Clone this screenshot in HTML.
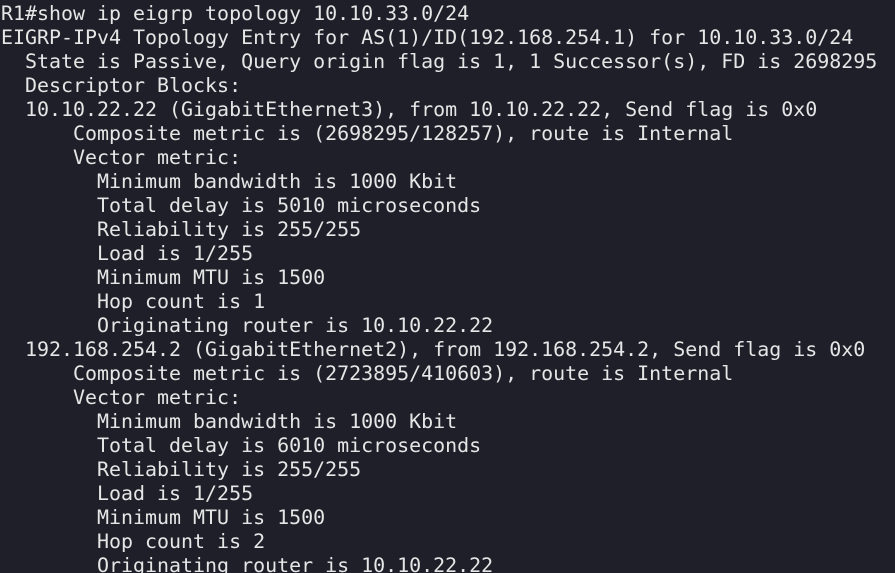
<!DOCTYPE html>
<html><head><style>
html,body{margin:0;padding:0;background:#1e1f29;width:895px;height:573px;overflow:hidden}
pre{margin:0;padding:1px 0 0 1px;font-family:"DejaVu Sans Mono","Liberation Mono",monospace;font-size:19.95px;line-height:24px;color:#e6e6e6;white-space:pre}
</style></head><body><pre>R1#show ip eigrp topology 10.10.33.0/24
EIGRP-IPv4 Topology Entry for AS(1)/ID(192.168.254.1) for 10.10.33.0/24
  State is Passive, Query origin flag is 1, 1 Successor(s), FD is 2698295
  Descriptor Blocks:
  10.10.22.22 (GigabitEthernet3), from 10.10.22.22, Send flag is 0x0
      Composite metric is (2698295/128257), route is Internal
      Vector metric:
        Minimum bandwidth is 1000 Kbit
        Total delay is 5010 microseconds
        Reliability is 255/255
        Load is 1/255
        Minimum MTU is 1500
        Hop count is 1
        Originating router is 10.10.22.22
  192.168.254.2 (GigabitEthernet2), from 192.168.254.2, Send flag is 0x0
      Composite metric is (2723895/410603), route is Internal
      Vector metric:
        Minimum bandwidth is 1000 Kbit
        Total delay is 6010 microseconds
        Reliability is 255/255
        Load is 1/255
        Minimum MTU is 1500
        Hop count is 2
        Originating router is 10.10.22.22</pre></body></html>
